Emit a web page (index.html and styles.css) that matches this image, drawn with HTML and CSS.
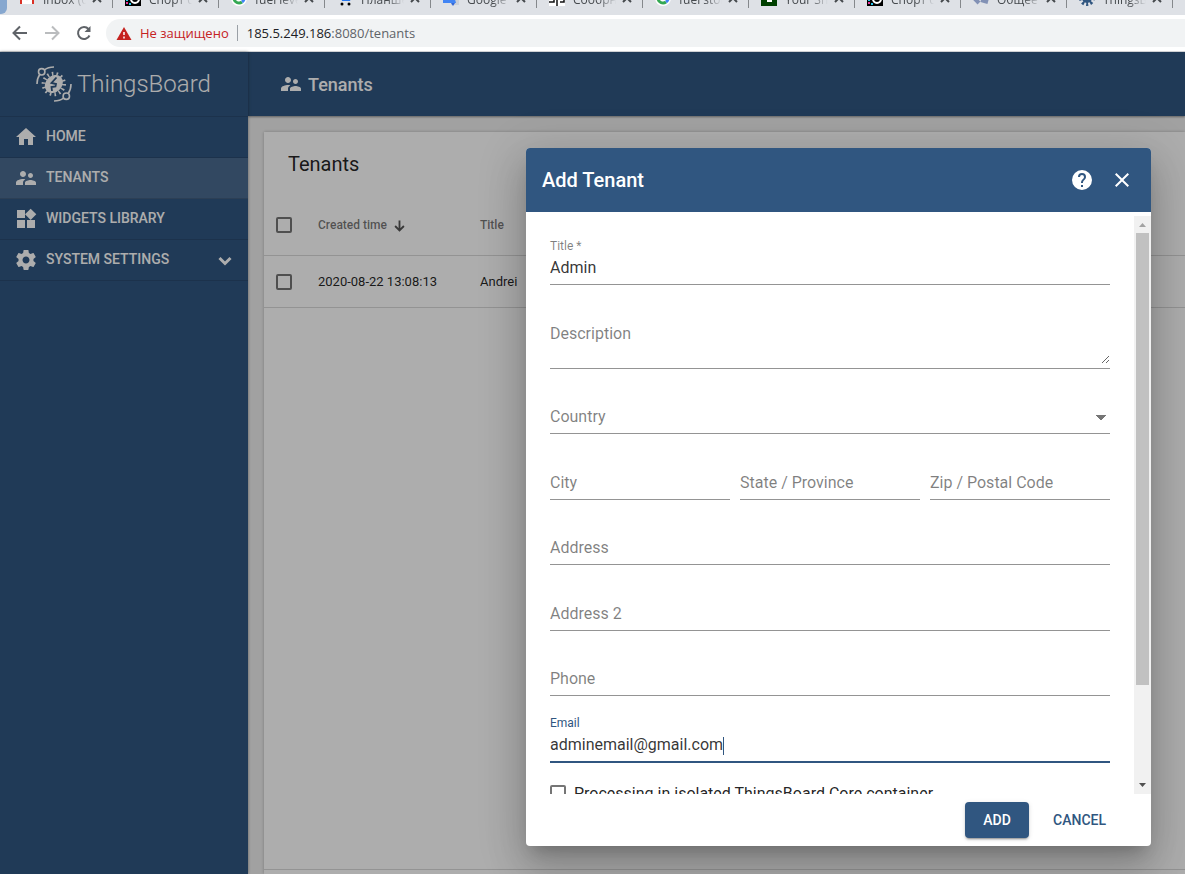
FILE: index.html
```html
<!DOCTYPE html>
<html lang="en">
<head>
  <meta charset="UTF-8" />
  <meta name="viewport" content="width=device-width, initial-scale=1.0"/>
  <title>ThingsBoard | Tenants</title>
  <link rel="stylesheet" href="styles.css">
</head>
<body>
  <svg class="defs" width="0" height="0" aria-hidden="true">
    <symbol id="cross" viewBox="0 0 10 10"><path d="M1 1l8 8M9 1L1 9" stroke="#45494d" stroke-width="2"/></symbol>
    <symbol id="people" viewBox="0 0 24 24"><path d="M16.5 12c1.38 0 2.49-1.12 2.49-2.5S17.88 7 16.5 7 14 8.12 14 9.5s1.12 2.5 2.5 2.5zM9 11c1.66 0 2.99-1.34 2.99-3S10.66 5 9 5 6 6.34 6 8s1.34 3 3 3zm7.5 3c-1.83 0-5.5.92-5.5 2.75V19h11v-2.25c0-1.83-3.67-2.75-5.5-2.75zM9 13c-2.33 0-7 1.17-7 3.5V19h7v-2.25c0-.85.33-2.34 2.37-3.47C10.5 13.1 9.66 13 9 13z"/></symbol>
    <symbol id="sport" viewBox="0 0 16 16"><path d="M0 0h16v16H0z"/><circle cx="10" cy="9" r="4" fill="none" stroke="#fff" stroke-width="2"/><path d="M1 9h2v2H1zM4 13h2v2H4z" fill="#25c4e8"/><path d="M1 12h2v2H1z" fill="#e6399b"/></symbol>
    <symbol id="fuel" viewBox="0 0 16 16"><circle cx="8" cy="8" r="8" fill="#fff"/><path d="M3 8a5 5 0 0 0 8 4" fill="none" stroke="#34a853" stroke-width="3"/><path d="M11 12a5 5 0 0 0 2-5" fill="none" stroke="#4285f4" stroke-width="3"/></symbol>
  </svg>

  <div class="browser">
    <div class="tabs">
      <div class="corner"></div>
      <div class="tab"><svg class="favicon" viewBox="0 0 16 16"><path d="M1 3h14v11H1z" fill="#fff"/><path d="M2 14V4l6 5 6-5v10" fill="none" stroke="#d93025" stroke-width="2"/></svg><span>Inbox (6</span><svg class="tab-close"><use href="#cross"/></svg></div>
      <div class="tab"><svg class="favicon"><use href="#sport"/></svg><span>Спорт с</span><svg class="tab-close"><use href="#cross"/></svg></div>
      <div class="tab"><svg class="favicon"><use href="#fuel"/></svg><span>fuel leve</span><svg class="tab-close"><use href="#cross"/></svg></div>
      <div class="tab"><svg class="favicon" viewBox="0 0 16 16"><path d="M4 6h11l-2 5H5z" fill="#2878f0"/><circle cx="5" cy="14" r="1.5"/><circle cx="12" cy="14" r="1.5"/></svg><span>Планше</span><svg class="tab-close"><use href="#cross"/></svg></div>
      <div class="tab"><svg class="favicon" viewBox="0 0 16 16"><path d="M8 5h8v10H8z" fill="#ccd0d6"/><path d="M0 2h10l3 11H0z" fill="#4285f4"/><path d="M8 13h4l-2 3z" fill="#3367d6"/></svg><span>Google</span><svg class="tab-close"><use href="#cross"/></svg></div>
      <div class="tab"><svg class="favicon" viewBox="0 0 16 16"><path d="M0 0h16v16H0z" fill="#fff"/><path d="M0 12h5V7M8 4v12M11 12h4V6" fill="none" stroke="#111" stroke-width="1.5"/></svg><span>Сообрн</span><svg class="tab-close"><use href="#cross"/></svg></div>
      <div class="tab"><svg class="favicon"><use href="#fuel"/></svg><span>fuel stor</span><svg class="tab-close"><use href="#cross"/></svg></div>
      <div class="tab"><svg class="favicon" viewBox="0 0 16 16"><path d="M0 0h16v16H0z" fill="#004000"/><path d="M6 7h5v5H6z" fill="#fff"/></svg><span>Your Sh</span><svg class="tab-close"><use href="#cross"/></svg></div>
      <div class="tab"><svg class="favicon"><use href="#sport"/></svg><span>Спорт с</span><svg class="tab-close"><use href="#cross"/></svg></div>
      <div class="tab"><svg class="favicon" viewBox="0 0 16 16"><path d="M1 8l5 5M8 10l7 2" stroke="#8291b5" stroke-width="4"/></svg><span>Общее</span><svg class="tab-close"><use href="#cross"/></svg></div>
      <div class="tab"><svg class="favicon" viewBox="0 0 16 16"><circle cx="8" cy="8" r="5" fill="#305680"/><circle cx="8" cy="8" r="6" fill="none" stroke="#305680" stroke-width="4" stroke-dasharray="2 2"/></svg><span>ThingsB</span><svg class="tab-close"><use href="#cross"/></svg></div>
      <div class="tab"><svg class="favicon" viewBox="0 0 16 16"><rect width="16" height="16" rx="2" fill="#f12b00"/></svg></div>
    </div>
    <div class="toolbar">
      <button class="nav-btn" aria-label="Back"><svg viewBox="0 0 16 16"><path d="M15 8H2M8 1.5L1.5 8 8 14.5"/></svg></button>
      <button class="nav-btn" aria-label="Forward" disabled><svg viewBox="0 0 16 16"><path d="M1 8h13M8 1.5L14.5 8 8 14.5"/></svg></button>
      <button class="nav-btn" aria-label="Reload"><svg viewBox="0 0 16 16"><path d="M13.5 10.5A6 6 0 1 1 12.5 4"/><path d="M14.5 1v6h-6z" class="tip"/></svg></button>
      <div class="address">
        <svg class="warn" viewBox="0 0 15 13"><path d="M7.5 0L15 13H0z" fill="#c5221f"/><path d="M7.5 5v3M7.5 9.5v2" stroke="#fff" stroke-width="1.5"/></svg>
        <span class="insecure" lang="ru">Не защищено</span>
        <span class="url">185.5.249.186<span class="path">:8080/tenants</span></span>
      </div>
    </div>
  </div>

  <div class="app">
    <nav class="sidebar">
      <a class="logo" href="#">
        <svg viewBox="0 0 36 36" fill="none" stroke="#fff">
          <g stroke-width="1.6">
            <circle cx="5.7" cy="5.8" r="3.2"/>
            <path d="M8.5 3.8C11 1.8 14 1 18 1M3.8 8.5C2 11 1 14 1 18"/>
            <circle cx="30.3" cy="30.2" r="3.2"/>
            <path d="M27.500 32.2C25 34.2 22 35 18 35M32.2 27.5C34 25 35 22 35 18"/>
          </g>
          <circle cx="17.8" cy="18" r="10" stroke-width="4.4" stroke-dasharray="1.5 2.988"/>
          <ellipse cx="17.8" cy="18" rx="10" ry="8" transform="rotate(-45 17.8 18)" fill="#fff" stroke="none"/>
          <path stroke="#305680" stroke-width="1.8" d="M20.5 11.5l-5 5.500 4.500 1-.5 2.500-4 .5.5 4"/>
        </svg>
        <span>ThingsBoard</span>
      </a>
      <a class="menu-item" href="#"><svg class="icon" viewBox="0 0 24 24"><path d="M10 20v-6h4v6h5v-8h3L12 3 2 12h3v8z"/></svg><span>Home</span></a>
      <a class="menu-item active" href="#"><svg class="icon"><use href="#people"/></svg><span>Tenants</span></a>
      <a class="menu-item" href="#"><svg class="icon" viewBox="0 0 24 24"><path d="M13 13v8h8v-8h-8zM3 21h8v-8H3v8zM3 3v8h8V3H3zm13.66-1.31L11 7.34 16.66 13l5.66-5.66-5.66-5.65z"/></svg><span>Widgets Library</span></a>
      <a class="menu-item" href="#"><svg class="icon" viewBox="0 0 24 24"><path fill-rule="evenodd" d="M19.43 12.98c.04-.32.07-.64.07-.98s-.03-.66-.07-.98l2.11-1.65c.19-.15.24-.42.12-.64l-2-3.46c-.12-.22-.39-.3-.61-.22l-2.49 1c-.52-.4-1.08-.73-1.69-.98l-.38-2.65C14.46 2.18 14.25 2 14 2h-4c-.25 0-.46.18-.49.42l-.38 2.65c-.61.25-1.17.59-1.69.98l-2.49-1c-.23-.09-.49 0-.61.22l-2 3.46c-.13.22-.07.49.12.64l2.11 1.65c-.04.32-.07.65-.07.98s.03.66.07.98l-2.11 1.65c-.19.15-.24.42-.12.64l2 3.46c.12.22.39.3.61.22l2.49-1c.52.4 1.08.73 1.69.98l.38 2.65c.03.24.24.42.49.42h4c.25 0 .46-.18.49-.42l.38-2.65c.61-.25 1.17-.59 1.69-.98l2.49 1c.23.09.49 0 .61-.22l2-3.46c.12-.22.07-.49-.12-.64l-2.11-1.65zM12 15.5c-1.93 0-3.5-1.57-3.5-3.5s1.57-3.5 3.5-3.5 3.5 1.57 3.5 3.5-1.57 3.5-3.5 3.5z"/></svg><span>System Settings</span><svg class="chevron" viewBox="0 0 14 10"><path d="M1.5 2L7 7.5 12.5 2"/></svg></a>
    </nav>

    <main class="main">
      <header class="topbar"><svg class="icon"><use href="#people"/></svg><span>Tenants</span></header>
      <section class="card">
        <h2>Tenants</h2>
        <table>
          <thead>
            <tr>
              <th class="col-check"><input type="checkbox" aria-label="Select all"></th>
              <th class="col-time">Created time <svg class="sort" viewBox="0 0 12 12"><path d="M6 0v11M1.2 6L6 10.8 10.8 6"/></svg></th>
              <th>Title</th>
            </tr>
          </thead>
          <tbody>
            <tr>
              <td><input type="checkbox" aria-label="Select Andrei"></td>
              <td>2020-08-22 13:08:13</td>
              <td>Andrei</td>
            </tr>
          </tbody>
        </table>
        <footer class="paginator"></footer>
      </section>
    </main>

    <div class="overlay">
      <form class="dialog" role="dialog" aria-labelledby="dialogTitle">
        <header class="dialog-header">
          <h2 id="dialogTitle">Add Tenant</h2>
          <button type="button" class="icon-btn" aria-label="Help"><svg class="icon" viewBox="0 0 24 24"><path d="M15.07 11.25l-.9.92C13.45 12.89 13 13.5 13 15h-2v-.5c0-1.11.45-2.11 1.17-2.83l1.24-1.26c.37-.36.59-.86.59-1.41a2 2 0 0 0-4 0H8a4 4 0 0 1 8 0c0 .88-.36 1.67-.93 2.25M13 19h-2v-2h2M12 2a10 10 0 0 0 0 20 10 10 0 0 0 0-20z"/></svg></button>
          <button type="button" class="icon-btn" aria-label="Close"><svg class="icon" viewBox="0 0 24 24"><path d="M19 6.41L17.59 5 12 10.59 6.41 5 5 6.41 10.59 12 5 17.59 6.41 19 12 13.41 17.59 19 19 17.59 13.41 12z"/></svg></button>
        </header>
        <div class="dialog-body">
          <div class="fields">
            <div class="inputs">
              <div class="field filled"><label for="title">Title *</label><input type="text" id="title" value="Admin"></div>
              <div class="field multiline"><label for="description">Description</label><textarea id="description"></textarea></div>
              <div class="field"><label for="country">Country</label><select id="country"><option></option></select></div>
              <div class="field-row">
                <div class="field"><label for="city">City</label><input type="text" id="city"></div>
                <div class="field"><label for="state">State / Province</label><input type="text" id="state"></div>
                <div class="field"><label for="zip">Zip / Postal Code</label><input type="text" id="zip"></div>
              </div>
              <div class="field"><label for="address">Address</label><input type="text" id="address"></div>
              <div class="field"><label for="address2">Address 2</label><input type="text" id="address2"></div>
              <div class="field"><label for="phone">Phone</label><input type="text" id="phone"></div>
              <div class="field filled focused"><label for="email">Email</label><input type="text" id="email" value="adminemail@gmail.com"><span class="caret"><span>adminemail@gmail.com</span></span></div>
            </div>
            <label class="check"><input type="checkbox"> Processing in isolated ThingsBoard Core container</label>
          </div>
          <div class="scrollbar">
            <svg viewBox="0 0 17 17"><path d="M5 11h7L8.5 7z" fill="#a3a3a3"/></svg>
            <div class="track"><div class="thumb"></div></div>
            <svg viewBox="0 0 17 17"><path d="M5 6h7L8.5 10z" fill="#505050"/></svg>
          </div>
        </div>
        <footer class="actions">
          <button type="button" class="btn primary">Add</button>
          <button type="button" class="btn">Cancel</button>
        </footer>
      </form>
    </div>
  </div>
</body>
</html>
```
FILE: styles.css
```css
* {
  box-sizing: border-box;
}

body {
  margin: 0;
  height: 100vh;
  display: flex;
  flex-direction: column;
  overflow: hidden;
  font-family: Roboto, sans-serif;
  font-size: 14px;
  color: rgba(0, 0, 0, 0.87);
}

a {
  color: inherit;
  text-decoration: none;
}

button, input, select, textarea {
  font-family: inherit;
}

button {
  border: none;
  background: none;
  padding: 0;
  cursor: pointer;
}

.defs {
  position: absolute;
}

.icon {
  width: 24px;
  height: 24px;
  fill: currentColor;
  flex: none;
}

/* browser bar */
.browser {
  flex: none;
  font-family: "Open Sans", "Noto Sans", sans-serif;
  border-bottom: 1px solid #d5d7da;
}

.tabs {
  display: flex;
  height: 15px;
  background: #dee1e6;
  overflow: hidden;
}

.corner {
  flex: none;
  width: 7px;
  height: 14px;
  background: #86a7cf;
  border-bottom-right-radius: 6px;
}

.tab {
  flex: none;
  width: 106px;
  height: 8px;
  padding: 0 10px 0 12px;
  display: flex;
  align-items: flex-end;
  border-right: 1px solid #85888c;
  overflow: hidden;
  font-size: 12px;
  line-height: 16px;
  color: #45494d;
}

.favicon {
  flex: none;
  width: 16px;
  height: 16px;
  margin: 0 8px 2px 0;
}

.tab span {
  flex: 1;
  overflow: hidden;
  white-space: nowrap;
  -webkit-mask-image: linear-gradient(to right, #000 60%, transparent);
  mask-image: linear-gradient(to right, #000 60%, transparent);
}

.tab-close {
  flex: none;
  width: 10px;
  height: 10px;
  margin: 0 0 5px 6px;
}

.toolbar {
  display: flex;
  align-items: center;
  height: 36px;
  padding-left: 4px;
  background: #fff;
}

.nav-btn {
  width: 32px;
  height: 32px;
  display: flex;
  align-items: center;
  justify-content: center;
  color: #5f6368;
}

.nav-btn:disabled {
  color: #babcbe;
}

.nav-btn svg {
  width: 16px;
  height: 16px;
  fill: none;
  stroke: currentColor;
  stroke-width: 2;
}

.nav-btn .tip {
  fill: currentColor;
  stroke: none;
}

.address {
  flex: 1;
  display: flex;
  align-items: center;
  height: 28px;
  margin-left: 6px;
  padding-left: 10px;
  border-radius: 14px 0 0 14px;
  background: #f1f3f4;
  font-size: 13px;
}

.warn {
  width: 16px;
  height: 13px;
  margin-right: 8px;
}

.insecure {
  color: #c5221f;
  padding-right: 8px;
  margin-right: 9px;
  border-right: 1px solid #9aa0a6;
  line-height: 16px;
}

.url {
  color: #202124;
}

.path {
  color: #5f6368;
}

/* app */
.app {
  flex: 1;
  min-height: 0;
  display: flex;
  position: relative;
  background: #eee;
}

.sidebar {
  flex: none;
  width: 248px;
  background: #305680;
  color: #fff;
  box-shadow: 0 0 3px rgba(0, 0, 0, 0.4);
  z-index: 1;
}

.logo {
  display: flex;
  align-items: center;
  height: 65px;
  padding-left: 36px;
  gap: 5px;
  border-bottom: 1px solid rgba(0, 0, 0, 0.12);
  font-size: 24px;
  font-weight: 300;
}

.logo svg {
  width: 36px;
  height: 36px;
}

.menu-item {
  display: flex;
  align-items: center;
  height: 41px;
  padding: 0 16px 0 14px;
  gap: 8px;
  border-bottom: 1px solid rgba(0, 0, 0, 0.12);
  font-weight: 500;
  text-transform: uppercase;
}

.menu-item span {
  padding-bottom: 2px;
}

.menu-item.active {
  background: rgba(255, 255, 255, 0.13);
}

.chevron {
  width: 14px;
  height: 10px;
  margin: 2px 0 0 auto;
  fill: none;
  stroke: currentColor;
  stroke-width: 3;
}

.main {
  flex: 1;
  min-width: 0;
  display: flex;
  flex-direction: column;
}

.topbar {
  flex: none;
  display: flex;
  align-items: center;
  gap: 5px;
  height: 64px;
  padding-left: 31px;
  background: #305680;
  color: #fff;
  font-size: 18px;
  font-weight: 500;
  box-shadow: 0 1px 2px rgba(0, 0, 0, 0.4);
}

.card {
  flex: 1;
  display: flex;
  flex-direction: column;
  margin: 16px 0 0 16px;
  background: #fff;
  box-shadow: 0 0 3px rgba(0, 0, 0, 0.25);
}

.card h2 {
  margin: 0;
  padding-left: 24px;
  font-size: 20px;
  font-weight: 400;
  line-height: 64px;
}

table {
  width: 100%;
  table-layout: fixed;
  border-collapse: separate;
  border-spacing: 0;
  font-size: 13px;
}

th, td {
  padding: 0;
  text-align: left;
  border-bottom: 1px solid rgba(0, 0, 0, 0.15);
}

th {
  height: 60px;
  padding-bottom: 2px;
  font-size: 12px;
  font-weight: 500;
  color: rgba(0, 0, 0, 0.54);
}

td {
  height: 52px;
}

.col-check {
  width: 54px;
}

.col-time {
  width: 162px;
}

.sort {
  width: 11px;
  height: 12px;
  margin-left: 4px;
  vertical-align: -3px;
  fill: none;
  stroke: #555;
  stroke-width: 2;
}

.paginator {
  height: 5px;
  margin-top: auto;
  border-top: 1px solid rgba(0, 0, 0, 0.15);
}

input[type="checkbox"] {
  appearance: none;
  flex: none;
  display: block;
  width: 16px;
  height: 16px;
  margin: 0;
  border: 2px solid rgba(0, 0, 0, 0.54);
  border-radius: 2px;
}

table input[type="checkbox"] {
  margin-left: 12px;
}

/* dialog */
.overlay {
  position: absolute;
  inset: 0;
  z-index: 2;
  display: flex;
  justify-content: flex-end;
  padding: 96px 34px 28px;
  background: rgba(0, 0, 0, 0.32);
}

.dialog {
  flex: 0 1 625px;
  display: flex;
  flex-direction: column;
  border-radius: 4px;
  background: #fff;
  overflow: hidden;
  box-shadow: 0 11px 15px -7px rgba(0, 0, 0, 0.2), 0 24px 38px 3px rgba(0, 0, 0, 0.14), 0 9px 46px 8px rgba(0, 0, 0, 0.12);
}

.dialog-header {
  flex: none;
  display: flex;
  align-items: center;
  height: 64px;
  padding: 0 9px 0 16px;
  background: #305680;
  color: #fff;
}

.dialog-header h2 {
  flex: 1;
  margin: 0;
  font-size: 20px;
  font-weight: 500;
}

.icon-btn {
  display: flex;
  align-items: center;
  justify-content: center;
  width: 40px;
  height: 40px;
  color: #fff;
}

.dialog-body {
  flex: 1;
  min-height: 0;
  display: flex;
  margin-top: 4px;
  overflow: hidden;
}

.fields {
  flex: 1;
  display: flex;
  flex-direction: column;
  gap: 18px;
  padding: 24px;
}

.inputs {
  flex: none;
  display: flex;
  flex-direction: column;
  justify-content: space-between;
  height: 523px;
}

.field {
  position: relative;
  padding: 19px 0 7px;
  border-bottom: 1px solid rgba(0, 0, 0, 0.42);
  font-size: 16px;
  line-height: 18px;
}

.field-row {
  display: grid;
  grid-template-columns: repeat(3, 1fr);
  gap: 10px;
}

.field label {
  position: absolute;
  top: 19px;
  left: 0;
  color: rgba(0, 0, 0, 0.5);
  pointer-events: none;
}

.field.filled label {
  top: 0;
  font-size: 12px;
  line-height: 12px;
}

.field input, .field select, .field textarea {
  display: block;
  width: 100%;
  height: 18px;
  padding: 0;
  border: none;
  background: none;
  outline: none;
  color: rgba(0, 0, 0, 0.8);
  font-size: 16px;
  line-height: 18px;
}

.field.multiline {
  padding-bottom: 4px;
}

.field textarea {
  height: 39px;
  resize: vertical;
}

.field select {
  appearance: none;
  background: conic-gradient(from -45deg at 50% 100%, rgba(0, 0, 0, 0.54) 0 90deg, transparent 0) right 4px top 7px / 10px 5px no-repeat;
}

.field.focused {
  border-bottom: 2px solid #305680;
}

.field.focused label {
  color: #305680;
}

/* text cursor behind the typed address */
.caret {
  position: absolute;
  top: 20px;
  left: 0;
  border-right: 1px solid #305680;
  pointer-events: none;
}

.caret span {
  visibility: hidden;
}

.check {
  flex: none;
  display: flex;
  align-items: center;
  gap: 8px;
  height: 24px;
  font-size: 16px;
}

.scrollbar {
  flex: none;
  display: flex;
  flex-direction: column;
  width: 17px;
  background: #f1f1f1;
}

.scrollbar svg {
  flex: none;
  width: 17px;
  height: 17px;
}

.track {
  flex: 1;
  padding: 0 2px;
}

.thumb {
  height: 83%;
  background: #c1c1c1;
}

.actions {
  flex: none;
  display: flex;
  justify-content: flex-end;
  gap: 8px;
  padding: 8px 29px 8px 8px;
}

.btn {
  min-width: 64px;
  height: 36px;
  padding: 0 16px;
  border-radius: 4px;
  color: #305680;
  font-size: 14px;
  font-weight: 500;
  text-transform: uppercase;
}

.btn.primary {
  background: #305680;
  color: #fff;
  box-shadow: 0 3px 1px -2px rgba(0, 0, 0, 0.2), 0 2px 2px rgba(0, 0, 0, 0.14), 0 1px 5px rgba(0, 0, 0, 0.12);
}
```
